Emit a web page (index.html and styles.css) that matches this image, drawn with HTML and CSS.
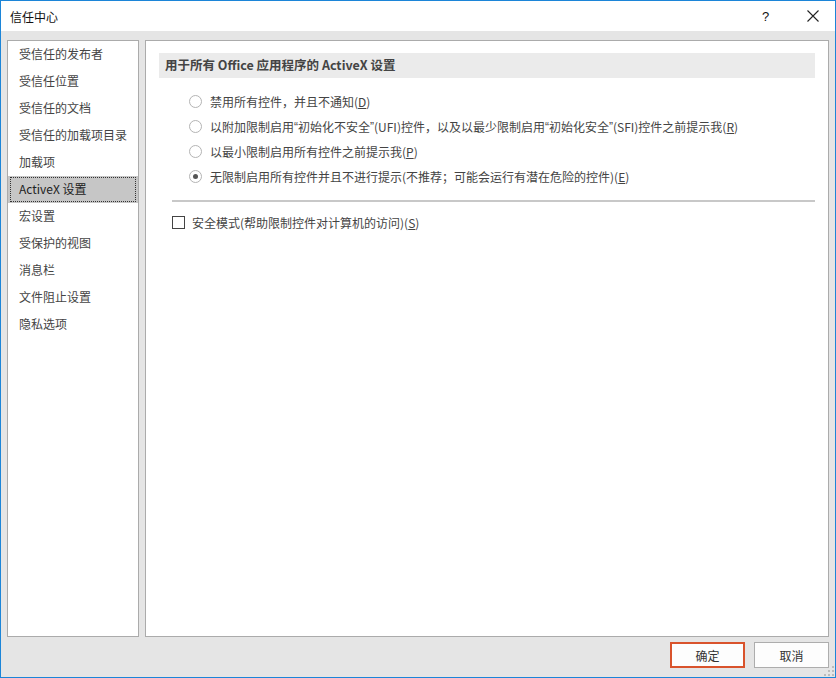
FILE: index.html
```html
<!DOCTYPE html>
<html lang="zh-CN">

<head>
    <meta charset="UTF-8">
    <title>信任中心</title>
    <link rel="stylesheet" href="styles.css">
</head>

<body>
    <div class="window">
        <div class="titlebar">
            <span class="title">信任中心</span>
            <span class="help">?</span>
            <span class="close">
                <svg width="12" height="12" viewBox="0 0 12 12">
                    <path d="M0.5 0.5 L11.5 11.5 M11.5 0.5 L0.5 11.5" stroke="#222" stroke-width="1.1" fill="none" />
                </svg>
            </span>
        </div>
        <div class="main">
            <div class="panels">
                <ul class="nav">
                    <li>受信任的发布者</li>
                    <li>受信任位置</li>
                    <li>受信任的文档</li>
                    <li>受信任的加载项目录</li>
                    <li>加载项</li>
                    <li class="active"><span>ActiveX 设置</span></li>
                    <li>宏设置</li>
                    <li>受保护的视图</li>
                    <li>消息栏</li>
                    <li>文件阻止设置</li>
                    <li>隐私选项</li>
                </ul>
                <div class="content">
                    <div class="section-head">用于所有 Office 应用程序的 ActiveX 设置</div>
                    <div class="options">
                        <div class="option"><span class="radio"></span>禁用所有控件，并且不通知(<u>D</u>)</div>
                        <div class="option"><span class="radio"></span>以附加限制启用<span class="q">“</span>初始化不安全<span class="q">”</span>(UFI)控件，以及以最少限制启用<span class="q">“</span>初始化安全<span class="q">”</span>(SFI)控件之前提示我(<u>R</u>)</div>
                        <div class="option"><span class="radio"></span>以最小限制启用所有控件之前提示我(<u>P</u>)</div>
                        <div class="option"><span class="radio checked"></span>无限制启用所有控件并且不进行提示(不推荐；可能会运行有潜在危险的控件)(<u>E</u>)</div>
                    </div>
                    <div class="divider"></div>
                    <div class="check-row"><span class="checkbox"></span>安全模式(帮助限制控件对计算机的访问)(<u>S</u>)</div>
                </div>
            </div>
            <div class="buttons">
                <button class="btn btn-ok">确定</button>
                <button class="btn">取消</button>
            </div>
            <svg class="grip" width="10" height="10" viewBox="0 0 10 10">
                <rect x="8" y="0" width="2" height="2" fill="#bcbcbc" />
                <rect x="4" y="4" width="2" height="2" fill="#bcbcbc" />
                <rect x="8" y="4" width="2" height="2" fill="#bcbcbc" />
                <rect x="0" y="8" width="2" height="2" fill="#bcbcbc" />
                <rect x="4" y="8" width="2" height="2" fill="#bcbcbc" />
                <rect x="8" y="8" width="2" height="2" fill="#bcbcbc" />
            </svg>
        </div>
    </div>
</body>

</html>
```

FILE: styles.css
```css
body {
    margin: 0;
    font-family: "Noto Sans CJK SC", "Liberation Sans", sans-serif;
    font-size: 12px;
    color: #444;
}

.window {
    width: 836px;
    height: 678px;
    box-sizing: border-box;
    border: 1px solid #1c85d8;
    display: flex;
    flex-direction: column;
}

.titlebar {
    height: 30px;
    background-color: #fff;
    display: flex;
    align-items: center;
    color: #111;
}

.title {
    flex: 1;
    padding-left: 9px;
    font-size: 12px;
}

.help {
    width: 14px;
    margin-right: 31px;
    font-size: 13px;
    font-family: "Liberation Sans", sans-serif;
}

.close {
    width: 12px;
    height: 12px;
    margin-right: 16px;
    display: flex;
}

.main {
    flex: 1;
    background-color: #e5e5e5;
    padding: 9px 6px 0 6px;
    display: flex;
    flex-direction: column;
    position: relative;
}

.panels {
    display: flex;
    gap: 6px;
    height: 597px;
}

.nav {
    list-style: none;
    margin: 0;
    padding: 0;
    width: 130px;
    background-color: #fff;
    border: 1px solid #ababab;
}

.nav li {
    height: 27px;
    line-height: 25px;
    padding-left: 11px;
}

.nav .active {
    background-color: #c6c6c6;
    padding: 1px 2px;
    height: 25px;
    line-height: 22px;
    color: #222;
}

.nav .active span {
    display: block;
    border: 1px dotted #333;
    padding-left: 8px;
    height: 23px;
}

.content {
    flex: 1;
    background-color: #fff;
    border: 1px solid #ababab;
    padding: 12px 13px 0 13px;
}

.section-head {
    height: 25px;
    line-height: 24px;
    background-color: #ebebeb;
    padding-left: 6px;
    font-weight: bold;
    font-size: 12.5px;
    color: #444;
}

.options {
    padding: 11px 0 0 30px;
}

.option {
    height: 25px;
    display: flex;
    align-items: center;
}

.q {
    font-family: "Liberation Sans", sans-serif;
}

.radio {
    width: 11px;
    height: 11px;
    border: 1px solid #b4b4b4;
    border-radius: 50%;
    margin-right: 8px;
    position: relative;
    box-sizing: content-box;
}

.radio.checked::after {
    content: "";
    position: absolute;
    left: 3px;
    top: 3px;
    width: 5px;
    height: 5px;
    border-radius: 50%;
    background-color: #555;
}

.divider {
    height: 2px;
    background-color: #c8c8c8;
    margin: 11px 0 0 13px;
}

.check-row {
    display: flex;
    align-items: center;
    padding-left: 13px;
    margin-top: 13px;
    height: 14px;
}

.checkbox {
    width: 11px;
    height: 11px;
    border: 1px solid #444;
    margin-right: 7px;
}

.buttons {
    display: flex;
    justify-content: flex-end;
    gap: 9px;
    margin-top: 5px;
}

.btn {
    width: 75px;
    height: 26px;
    background-color: #fdfdfd;
    border: 1px solid #adadad;
    font-family: inherit;
    font-size: 12px;
    color: #333;
    padding: 0;
}

.btn-ok {
    border: 2px solid #d9532c;
}

.grip {
    position: absolute;
    right: 1px;
    bottom: 1px;
}
```
